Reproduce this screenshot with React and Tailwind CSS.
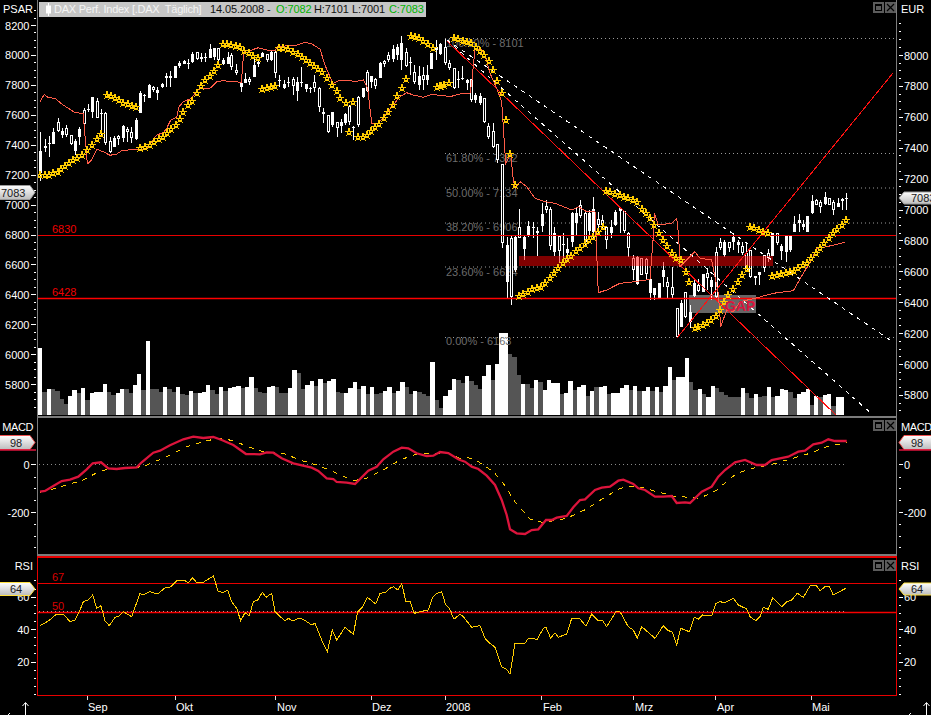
// DAX chart screen: price pane, MACD pane, RSI pane and the time axis
const pts = (ox, oy, a) => {
  const out = [];
  for (let i = 0; i < a.length; i += 2) out.push(`${(ox + a[i] / 3).toFixed(1)},${(oy + a[i + 1] / 3).toFixed(1)}`);
  return out;
};
const raw = (ox, oy, a) => pts(ox, oy, a).map((s) => s.split(",").map(Number));

// x, high, body top, body bottom, low, hollow
const candles = [
  [40,132,151,173,181,0],[45,139,146,148,152,0],[49,136,143,144,157,0],[53,128,132,144,144,0],[58,118,122,131,132,1],[62,128,131,135,138,0],
  [66,125,128,135,137,1],[71,135,135,144,145,1],[75,139,141,151,155,0],[79,127,129,137,145,0],[84,108,110,124,128,1],[88,104,109,110,112,0],
  [92,97,97,112,118,0],[97,98,101,118,118,1],[101,109,113,114,135,0],[105,112,113,143,145,1],[110,137,141,152,153,1],[114,136,138,147,147,0],
  [118,135,136,139,145,1],[123,125,126,138,142,0],[127,127,129,132,142,1],[131,127,132,138,143,1],[136,118,120,139,140,0],[140,91,93,113,113,0],
  [144,94,95,96,102,0],[149,84,85,98,98,0],[153,86,87,90,92,1],[157,87,90,93,100,0],[162,83,84,87,88,0],[166,73,76,78,87,0],[170,71,76,78,87,0],
  [175,66,66,78,78,0],[179,61,63,66,68,0],[184,60,61,64,64,0],[188,59,63,64,69,0],[192,52,54,62,63,0],[197,52,52,59,60,1],[201,53,57,59,62,0],
  [205,53,57,58,62,0],[210,44,49,58,58,0],[214,48,48,57,60,0],[218,48,48,60,61,1],[223,58,60,64,65,0],[228,52,57,64,64,0],[231,53,55,67,70,1],
  [236,64,70,73,75,1],[241,82,83,87,92,0],[245,73,79,83,83,0],[249,77,79,82,85,1],[254,59,65,77,77,0],[258,60,62,64,67,0],[262,52,53,57,57,0],
  [267,54,54,60,62,1],[271,51,52,60,61,0],[275,51,52,73,78,1],[279,75,80,81,87,0],[284,80,84,88,89,0],[288,77,82,83,87,0],[293,77,79,86,95,1],
  [297,77,82,91,101,0],[301,67,82,83,87,1],[306,84,84,89,92,0],[310,87,88,89,93,0],[314,75,82,88,92,1],[319,87,88,107,112,1],[323,108,112,114,123,1],
  [328,115,115,132,133,1],[332,112,112,125,127,0],[337,122,122,128,137,1],[341,119,122,126,133,0],[345,113,114,123,125,0],[349,105,106,122,125,1],
  [353,126,127,128,140,0],[358,96,97,125,127,1],[363,88,88,97,98,0],[367,70,72,91,92,1],[371,76,76,82,88,0],[375,78,79,86,89,1],[380,62,63,78,78,0],
  [384,60,61,64,67,1],[388,52,55,60,62,1],[393,45,49,59,62,0],[397,44,47,55,60,0],[401,36,43,60,70,0],[406,48,52,66,67,1],[410,57,62,63,75,0],
  [414,65,72,82,84,1],[419,66,76,85,90,0],[423,67,75,80,90,1],[427,65,75,80,85,0],[431,53,53,69,69,0],[436,40,47,50,60,0],[440,43,44,54,55,0],
  [445,39,47,63,65,1],[449,60,63,68,70,1],[454,68,68,88,89,1],[458,71,79,80,88,0],[462,66,78,79,80,0],[467,79,80,83,90,0],[471,79,79,100,102,1],
  [475,93,95,100,103,0],[480,93,96,103,105,0],[484,98,98,122,123,1],[488,123,126,137,139,1],[493,123,131,147,148,1],[497,144,144,160,163,1],
  [502,164,164,243,248,1],[507,237,245,282,299,0],[511,235,238,297,305,1],[515,236,237,270,272,0],[519,209,227,238,238,1],[524,236,237,249,260,0],
  [528,221,226,236,237,0],[533,222,227,228,238,0],[537,227,231,233,256,0],[542,203,214,226,232,0],[546,200,206,210,213,1],[550,207,209,246,250,1],
  [554,227,233,252,256,0],[559,236,236,251,263,1],[563,233,244,245,258,0],[567,238,249,253,260,0],[572,212,213,242,247,0],[576,208,213,223,235,0],
  [580,200,205,216,218,1],[585,212,213,242,247,1],[589,210,213,231,235,0],[593,197,209,232,240,0],[598,212,219,225,233,1],[602,215,220,225,230,1],
  [606,226,227,240,249,1],[611,220,227,233,238,0],[615,210,212,225,226,0],[620,207,208,211,233,0],[624,211,211,231,233,1],[628,232,233,248,257,1],
  [633,255,258,270,280,1],[637,256,257,284,285,0],[641,258,258,275,275,1],[646,258,259,274,280,1],[650,278,279,293,300,0],[654,288,288,295,300,0],
  [659,283,283,298,298,0],[663,262,270,277,287,0],[667,277,282,287,298,1],[672,267,287,295,298,1],[677,308,308,337,338,1],[681,300,303,327,327,0],
  [685,292,292,317,318,1],[690,305,312,322,328,0],[694,280,283,296,297,0],[698,279,285,291,292,1],[703,274,274,292,292,0],[707,268,273,278,290,1],
  [711,277,280,287,300,0],[716,247,252,297,298,1],[720,238,242,248,250,1],[724,240,242,255,257,0],[729,242,242,248,252,1],[733,233,237,242,250,0],
  [738,240,242,245,253,0],[742,242,246,253,255,1],[746,242,253,272,272,1],[750,250,250,277,278,1],[755,276,276,278,285,0],[759,272,272,275,285,0],
  [764,255,255,268,272,1],[768,249,253,258,262,1],[772,233,233,256,256,0],[777,233,233,243,245,1],[781,244,246,251,260,0],[786,235,236,252,262,0],
  [790,235,236,250,252,0],[794,216,224,232,232,0],[799,214,220,223,232,0],[803,220,224,227,230,0],[807,216,216,232,232,0],[812,195,201,213,214,0],
  [816,199,200,205,205,1],[820,200,202,207,213,1],[825,192,197,204,205,0],[829,198,198,205,205,1],[833,200,202,210,215,1],[838,198,203,207,207,0],
  [842,198,199,201,210,0],[846,193,198,199,210,0],
];

// tops of the volume bars, negative = grey
const volHead = [385,-517,507,-507,-513,-537,-552,528,510,-519,504,-540,519,516,516,492,-516,-525,519,507,-507,-519,495,462,-510,363,-507,-507,-516,501,-507,-516,501,-522,-525,513,-519,519,516,495,-510,-522,501,-513,504,501,498,-504,501,471,-504,-516,-519,501,498,-501,-519,-519,504,450,-459,-507,495,483,-498,477,-489,483,477,-516,-519,519,504,486,-507,498,-522,501,-522,-519,513,501,-519,513,486,-501,-522,513,-516,-522,-528,426,-540,-564,528,510,477,-480];
const volTail = [-640,618,-633,-645,-658,618,585,-630,582,490,490,-553,-562,-615,642,-642,-655,630,-635,660,630,640,638,-672,668,632,-660,650,646,-678,662,-650,650,648,-672,670,670,655,645,-660,648,-662,662,650,-662,650,-665,648,590,-630,620,620,565,-635,-660,658,-672,680,648,-655,-665,-675,-680,-682,-682,655,-668,-683,672,-680,-678,652,-680,678,658,660,-665,-685,672,665,658,-705,678,-680,675,672,-708,680,680];
const volume = [
  ...volHead.map((v) => ({ top: 220 + Math.abs(v) / 3, up: v > 0 })),
  ...volTail.map((v) => ({ top: 170 + Math.abs(v) / 3, up: v > 0 })),
];

const bandLine = [
  ...pts(0, 0, [120,305,133,283,145,293,165,295,185,312,205,325,225,338,250,340,253,385,258,440,262,492,275,480,290,448,310,455,330,466,350,462,365,452,385,450,410,447,425,450,440,445,455,425,470,405,490,398,500,385,512,360,530,352,537,320,550,305,575,295,590,272,605,265,630,265,650,245,670,242,700,245,725,247,727,200,733,150,755,150,775,143,800,150,825,153,832,140,865,137,885,137,915,127,935,132,960,147,975,195,990,230,1000,250,1015,242,1040,240,1065,245,1090,240,1103,265,1115,370,1130,372,1150,355,1175,320,1200,290,1220,278,1240,285,1270,292,1300,282,1320,287]),
  ...pts(440, 0, [0,285,30,290,60,282,90,280,95,250,105,145,125,150,135,165,150,220,170,265,185,305,190,380,197,490,212,460,220,540,227,565]),
  ...pts(440, 170, [240,35,260,50,285,85,315,95,345,100,395,120,415,110,440,125,465,125,468,200,470,250,475,368,500,360,540,340,585,335,630,328,640,200,643,130,655,165,695,160,710,145,716,200,720,290,765,245,780,265,815,270,835,370,842,470,860,420,880,425,900,395,945,385,1000,370,1060,362,1090,310,1115,270,1130,235,1160,230,1215,217]),
].join(" ");

const sar = [
  ...raw(0, 0, [120,525,134,525,147,525,160,520,173,515,183,507,196,497,208,490,220,480,232,475,245,465,262,450,277,435,290,417,303,403,320,285,332,288,345,295,358,300,370,308,383,312,395,318,407,322,420,445,435,440,450,435,463,427,477,418,490,410,500,400,512,388,527,375,539,358,550,337,565,315,577,303,590,280,603,258,616,240,630,228,643,212,655,196,668,132,681,132,694,135,707,138,720,142,733,152,748,160,760,167,773,175,787,267,800,263,812,260,825,258,838,145,850,143,865,148,878,155,893,163,905,172,917,180,930,190,942,197,955,207,967,215,982,235,997,255,1010,272,1021,293,1037,308,1060,305,1048,397,1075,410,1088,410,1100,405,1112,393,1125,380,1138,372,1152,355,1165,337,1180,315,1190,288,1205,263,1218,237,1232,107,1245,110,1258,115,1270,122,1283,133,1298,145,1310,260,1322,258]),
  ...raw(440, 0, [0,258,13,255,26,248,42,113,55,118,68,122,80,125,93,130,107,140,120,152,133,165,148,183,160,210,172,243,187,280,199,360,211,462,225,555]),
  ...raw(440, 170, [237,378,250,372,263,365,277,358,290,353,302,350,315,340,330,325,343,310,355,295,370,280,380,268,393,257,408,243,420,235,435,222,448,210,460,200,475,185,488,172,498,62,510,65,525,72,540,75,553,80,565,83,580,90,592,97,605,118,618,130,630,145,643,165,658,188,670,210,682,228,696,248,708,265,722,270,737,305,748,335,765,473,775,472,788,465,800,460,813,450,828,437,841,420,853,397,865,375,880,357,895,337,907,315,920,297,930,170,943,175,956,180,970,187,985,190,995,318,1010,315,1022,312,1037,309,1050,305,1063,302,1075,295,1088,285,1100,278,1113,265,1128,250,1140,233,1153,220,1167,205,1180,190,1192,178,1205,165,1218,150]),
];

const macdRed = [
  ...pts(0, 410, [120,245,135,243,160,228,185,213,210,209,235,200,260,178,278,160,303,157,325,175,350,177,375,174,410,172,425,157,460,128,480,122,510,106,550,88,580,80,610,84,640,81,665,90,700,105,738,132,780,133,800,127,820,128,845,145,880,160,935,173,955,183,980,205,1000,207,1010,216,1040,218,1065,222,1105,182,1130,170,1150,148,1180,125,1205,113,1225,115,1250,130,1280,138,1300,137,1320,126,1345,129,1375,148]),
  ...pts(460, 410, [0,150,15,155,35,170,55,177,80,197,105,225,125,270,140,315,150,358,170,370,195,372,215,360,235,358,258,330,275,330,290,323,320,318,340,292,360,270,375,268,405,240,425,233,450,230,475,212,490,209,520,222,535,235,555,240,585,260,610,260,635,258,650,279,675,277,690,279,725,245,755,230,775,200,795,180,825,157,855,150,890,165,915,165,935,150,985,140,1015,125,1035,122,1060,103,1085,98,1105,88,1125,93,1160,93]),
].join(" ");
const macdSignal = [
  ...pts(0, 410, [120,247,150,240,210,222,250,210,300,183,330,177,400,175,440,165,500,140,560,110,620,92,660,85,700,92,745,110,790,125,850,130,900,150,950,165,1000,185,1060,212,1100,205,1150,180,1200,150,1250,132,1300,130,1350,132]),
  ...pts(460, 410, [0,145,25,143,55,155,100,185,130,220,165,275,210,328,250,338,320,325,380,297,430,265,480,235,530,228,590,245,640,258,720,265,770,240,830,190,890,172,930,165,980,150,1050,130,1100,110,1160,98]),
].join(" ");
const rsiLine = [
  ...pts(0, 410, [120,647,145,633,170,612,190,612,210,635,225,630,240,600,250,575,265,570,278,555,290,595,303,587,315,633,328,647,345,622,358,618,370,605,395,620,420,550,430,555,450,545,473,552,497,532,510,532,530,512,555,512,565,518,578,503,590,518,610,517,640,498,655,545,670,547,683,540,695,575,710,595,722,632,735,608,748,617,760,575,773,570,787,547,798,562,815,550,825,605,855,633,865,625,878,633,895,625,910,628,935,645,945,640,965,690,982,725,997,660,1010,690,1035,652,1060,673,1073,605,1088,590,1102,562,1127,582,1140,550,1155,548,1170,535,1180,530,1193,540,1205,522,1218,575,1230,573,1243,610,1270,603,1285,600,1298,562,1310,550,1325,545,1337,585,1348,595,1362,628]),
  ...pts(460, 410, [0,612,10,620,35,652,60,647,75,685,90,700,105,712,125,770,140,778,150,793,165,700,195,700,205,685,232,688,250,655,258,652,272,685,285,668,295,682,320,672,335,625,358,625,378,648,395,612,415,632,428,632,440,650,468,605,480,605,505,650,520,660,532,685,545,650,585,685,610,647,622,660,637,667,650,705,662,655,688,665,703,622,715,628,728,615,755,618,768,580,780,575,795,578,820,565,835,585,860,597,870,620,887,632,900,620,910,592,925,598,938,563,965,590,980,575,995,570,1012,550,1030,562,1050,528,1068,525,1080,542,1095,530,1108,530,1120,555,1157,535]),
].join(" ");

const fib = [
  [38.5, 47, "100.00% - 8101"],
  [153.5, 162, "61.80% - 7362"],
  [188, 197, "50.00% - 7134"],
  [223, 231, "38.20% - 6906"],
  [267, 276, "23.60% - 6624"],
  [337.5, 345, "0.00% - 6163"],
];

const months = [
  [87.5, 88, "Sep"],
  [175, 176, "Okt"],
  [275, 277, "Nov"],
  [371, 372, "Dez"],
  [445, 446, "2008"],
  [541, 543, "Feb"],
  [633, 635, "Mrz"],
  [715, 717, "Apr"],
  [811, 812, "Mai"],
];

function WindowButtons() {
  return (
    <div className="absolute top-[2px] right-0 flex gap-px">
      <div className="w-[11px] h-[11px] bg-[#5c5c5c] flex items-center justify-center">
        <div className="w-[7px] h-[7px] border border-black border-t-2" />
      </div>
      <div className="w-[11px] h-[11px] bg-[#5c5c5c] flex items-center justify-center">
        <svg width="9" height="9" viewBox="0 0 9 9">
          <path d="M1 1L8 8M8 1L1 8" stroke="#000" strokeWidth="1.2" />
        </svg>
      </div>
    </div>
  );
}

// value tag on an axis, side tells which edge of the chart it sits on
function Tag({ x, y, h = 14, side, label, edge = "#9a9a9a", under, textX }) {
  const d =
    side === "left"
      ? `M${x},${y} H${x + 31} L${x + 36},${y + h / 2} L${x + 31},${y + h} H${x} Z`
      : `M${x + 37},${y} H${x + 5} L${x},${y + h / 2} L${x + 5},${y + h} H${x + 37} Z`;
  return (
    <g>
      <path d={d} fill="url(#tagFill)" stroke={edge} strokeWidth="1" />
      {under && <path d={`M${x},${y + h + 0.5} H${x + 37}`} stroke={under} strokeWidth="1.5" />}
      <text x={textX} y={y + h / 2 + 4} className="fill-[#202020] text-[11px]">
        {label}
      </text>
    </g>
  );
}

function TagDefs() {
  return (
    <defs>
      <linearGradient id="tagFill" x1="0" y1="0" x2="0" y2="1">
        <stop offset="0" stopColor="#ffffff" />
        <stop offset="1" stopColor="#bdbdbd" />
      </linearGradient>
    </defs>
  );
}

function LeftAxis({ top, height, majors, minors, children }) {
  return (
    <svg width="37" height={height} viewBox={`0 ${top} 37 ${height}`} className="block shrink-0">
      <TagDefs />
      {minors.map((y) => (
        <rect key={y} x="34" y={Math.round(y)} width="2" height="1" fill="#fff" />
      ))}
      {majors.map(([y, label]) => (
        <g key={label}>
          <rect x="31" y={Math.round(y)} width="5" height="1" fill="#fff" />
          <text x="29.5" y={y + 4.5} textAnchor="end" className="fill-white text-[11px]">
            {label}
          </text>
        </g>
      ))}
      {children}
    </svg>
  );
}

function RightAxis({ top, height, majors, minors, children }) {
  return (
    <svg width="34" height={height} viewBox={`897 ${top} 34 ${height}`} className="block shrink-0">
      <TagDefs />
      {minors.map((y) => (
        <rect key={y} x="899" y={Math.round(y)} width="2" height="1" fill="#fff" />
      ))}
      {majors.map(([y, label]) => (
        <g key={label}>
          <rect x="899" y={Math.round(y)} width="4" height="1" fill="#fff" />
          <text x="904" y={y + 4.5} className="fill-white text-[11px]">
            {label}
          </text>
        </g>
      ))}
      {children}
    </svg>
  );
}

const quarterTicks = (start, step, count) => {
  const out = [];
  for (let i = 0; i < count; i++) if (i % 4 !== 0) out.push(start + (i * step) / 4);
  return out;
};

const mainLeftMajors = ["8200","8000","7800","7600","7400","7200","7000","6800","6600","6400","6200","6000","5800"].map((l, i) => [25 + i * 29.93, l]);
const mainRightMajors = ["8000","7800","7600","7400","7200","7000","6800","6600","6400","6200","6000","5800"].map((l, i) => [55 + i * 30.9, l]);

function PricePlot() {
  return (
    <svg width="858" height="415" viewBox="38 0 858 415" className="block">
      {volume.map((v, i) => {
        const x = Math.round(38 + i * 4.312);
        const next = Math.round(38 + (i + 1) * 4.312);
        return <rect key={i} x={x} y={v.top} width={next - x} height={416 - v.top} fill={v.up ? "#fff" : "#555"} shapeRendering="crispEdges" />;
      })}

      {fib.map(([y, ty, label]) => (
        <g key={label}>
          <path d={`M445 ${y}H897`} stroke="#9a9a9a" strokeDasharray="1 3" />
          <text x="446" y={ty} className="fill-[#6c6c6c] text-[11px]">
            {label}
          </text>
        </g>
      ))}

      <g shapeRendering="crispEdges">
        {candles.map(([x, hi, top, bot, lo, hollow]) => (
          <g key={x}>
            <rect x={x} y={hi} width="1" height={lo - hi} fill="#fff" />
            <rect x={x - 1} y={top} width="3" height={Math.max(bot - top, 1)} fill="#fff" />
            {hollow === 1 && <rect x={x} y={top + 1} width="1" height={Math.max(bot - top - 2, 0)} fill="#000" />}
          </g>
        ))}
      </g>

      <rect x="519" y="256" width="254" height="10" fill="#ff0000" fillOpacity="0.5" shapeRendering="crispEdges" />
      <rect x="689" y="295" width="67" height="18" fill="#ffffff" fillOpacity="0.4" shapeRendering="crispEdges" />

      <path d="M38 235.5H897" stroke="#e80000" />
      <path d="M38 298.5H897" stroke="#ff0000" strokeWidth="1.6" />
      <text x="52" y="233" className="fill-[#f00000] text-[11px]">6830</text>
      <text x="52" y="296" className="fill-[#f00000] text-[11px]">6428</text>

      <path d="M447 40L893 342" stroke="#fff" strokeDasharray="4 5" shapeRendering="crispEdges" />
      <path d="M447 40L873 415" stroke="#fff" strokeDasharray="4 5" shapeRendering="crispEdges" />
      <path d="M447 41L836 415" stroke="#ff1010" shapeRendering="crispEdges" />
      <path d="M677 338L893 73" stroke="#ff1010" shapeRendering="crispEdges" />

      <polyline points={bandLine} fill="none" stroke="#ff5c48" strokeWidth="1" shapeRendering="crispEdges" />

      {sar.map(([x, y], i) => (
        <path
          key={i}
          transform={`translate(${Math.round(x)} ${Math.round(y)})`}
          d="M0 -3.5L2 3L-3.5 -1H3.5L-2 3Z"
          fill="none"
          stroke="#ffcc00"
          strokeWidth="1"
          shapeRendering="crispEdges"
        />
      ))}

      <text x="725" y="311" className="fill-[#dc143c] text-[14px] font-bold">
        GAP
      </text>
    </svg>
  );
}

function MacdPlot() {
  return (
    <svg width="858" height="136" viewBox="38 418 858 136" className="block">
      <path d="M39 464.5H846" stroke="#8a8a8a" strokeDasharray="1 3" />
      <polyline points={macdSignal} fill="none" stroke="#ffcc00" strokeWidth="1" strokeDasharray="5 6" shapeRendering="crispEdges" />
      <polyline points={macdRed} fill="none" stroke="#dc143c" strokeWidth="2.3" />
    </svg>
  );
}

function RsiPlot() {
  return (
    <svg width="858" height="137" viewBox="38 558 858 137" className="block">
      <path d="M38 583.5H896" stroke="#e80000" />
      <path d="M39 611.5H846" stroke="#bbbbbb" strokeDasharray="1 3" />
      <path d="M38 612.5H896" stroke="#f80000" strokeWidth="1.4" />
      <text x="52" y="581" className="fill-[#d80000] text-[11px]">67</text>
      <text x="52" y="610" className="fill-[#d80000] text-[11px]">50</text>
      <polyline points={rsiLine} fill="none" stroke="#ffcc00" strokeWidth="1" shapeRendering="crispEdges" />
    </svg>
  );
}

export default function App() {
  return (
    <div className="w-[931px] h-[715px] bg-black overflow-hidden text-white text-[11px] font-['Liberation_Sans',sans-serif]">
      {/* price pane */}
      <div className="flex h-[418px]">
        <div className="relative w-[37px] shrink-0">
          <LeftAxis top={0} height={418} majors={mainLeftMajors} minors={[10, 18, ...quarterTicks(25, 29.93, 52)]}>
            <Tag x={-1} y={185.5} side="left" label="7083" textX={1} />
          </LeftAxis>
          <span className="absolute top-[3px] right-[4px] text-[11px] leading-[13px]">PSAR</span>
        </div>
        <div className="relative w-[860px] shrink-0 border-x border-b-2 border-[#7c7c7c]">
          <PricePlot />
          <div className="absolute top-[2px] left-[1px] w-[387px] h-[15px] bg-[#c6c6c6] flex items-center pl-[5px] whitespace-pre text-[#121212] leading-none">
            <svg width="10" height="13" viewBox="0 0 10 13" className="shrink-0">
              <path d="M4.5 0V13" stroke="#fff" strokeWidth="1" />
              <rect x="2" y="2.5" width="5" height="8" fill="#fff" />
            </svg>
            <span className="text-[#f4f4f4] w-[156px] tracking-[-0.25px]">DAX Perf. Index [.DAX  Täglich]</span>
            <span className="w-[66px] tracking-[-0.1px]">14.05.2008 -</span>
            <span className="text-[#00b400] w-[38px] tracking-[-0.1px]">O:7082</span>
            <span className="w-[38px] tracking-[-0.1px]">H:7101</span>
            <span className="w-[37px] tracking-[-0.1px]">L:7001</span>
            <span className="text-[#00b400] tracking-[-0.1px]">C:7083</span>
          </div>
          <WindowButtons />
        </div>
        <div className="relative w-[34px] shrink-0">
          <RightAxis top={0} height={418} majors={mainRightMajors} minors={[22.7, 30.7, 39, 47, ...quarterTicks(55, 30.9, 48)]}>
            <Tag x={899} y={192} h={12} side="right" label="7083" textX={911} />
          </RightAxis>
          <span className="absolute top-[3px] left-[4px] leading-[13px]">EUR</span>
        </div>
      </div>

      {/* macd pane */}
      <div className="flex h-[138px]">
        <div className="relative w-[37px] shrink-0">
          <LeftAxis
            top={418}
            height={138}
            majors={[[464, "0"], [512, "-200"]]}
            minors={[476.7, 488, 499.5, 523.5, 536, 547]}
          >
            <Tag x={-1} y={435.5} h={14} side="left" label="98" edge="#f05050" under="#dc143c" textX={10} />
          </LeftAxis>
          <span className="absolute top-[3px] right-[4px] leading-[13px] tracking-[-0.4px]">MACD</span>
        </div>
        <div className="relative w-[860px] shrink-0 border-x border-b-2 border-[#7c7c7c]">
          <MacdPlot />
          <WindowButtons />
        </div>
        <div className="relative w-[34px] shrink-0">
          <RightAxis
            top={418}
            height={138}
            majors={[[464, "0"], [512, "-200"]]}
            minors={[476.7, 488, 499.5, 523.5, 536, 547]}
          >
            <Tag x={899} y={435.5} h={14} side="right" label="98" edge="#f05050" under="#dc143c" textX={911} />
          </RightAxis>
          <span className="absolute top-[3px] left-[4px] leading-[13px] tracking-[-0.4px]">MACD</span>
        </div>
      </div>

      {/* rsi pane */}
      <div className="flex h-[140px]">
        <div className="relative w-[37px] shrink-0">
          <LeftAxis
            top={556}
            height={140}
            majors={[[596.5, "60"], [629, "40"], [661.7, "20"]]}
            minors={[580, 588.5, 605, 613, 621, 637, 645, 653, 670, 678, 686, 694]}
          >
            <Tag x={-1} y={582.5} h={13} side="left" label="64" edge="#ffe040" textX={10} />
          </LeftAxis>
          <span className="absolute top-[4px] right-[4px] leading-[13px]">RSI</span>
        </div>
        <div className="relative w-[860px] shrink-0 border-x border-y-2 border-[#e80000] border-b">
          <RsiPlot />
          <WindowButtons />
        </div>
        <div className="relative w-[34px] shrink-0">
          <RightAxis
            top={556}
            height={140}
            majors={[[596.5, "60"], [629, "40"], [661.7, "20"]]}
            minors={[580, 588.5, 605, 613, 621, 637, 645, 653, 670, 678, 686, 694]}
          >
            <Tag x={899} y={583} h={12} side="right" label="64" edge="#ffe040" textX={911} />
          </RightAxis>
          <span className="absolute top-[4px] left-[4px] leading-[13px]">RSI</span>
        </div>
      </div>

      {/* time axis */}
      <svg width="931" height="19" viewBox="0 696 931 19" className="block">
        {months.map(([tx, lx, label]) => (
          <g key={label}>
            <rect x={Math.floor(tx)} y="696" width="1" height="4" fill="#ddd" />
            <text x={lx} y="711" className="fill-white text-[11px]">
              {label}
            </text>
          </g>
        ))}
        <path d="M25.5 715V703M22.5 706L25.5 702.5L28.5 706" fill="none" stroke="#fff" />
        <path d="M926.5 715V703M923.5 706L926.5 702.5L929.5 706" fill="none" stroke="#fff" />
        <path d="M8 715L10 713" stroke="#fff" />
        <path d="M909 715L911 713" stroke="#fff" />
      </svg>
    </div>
  );
}
